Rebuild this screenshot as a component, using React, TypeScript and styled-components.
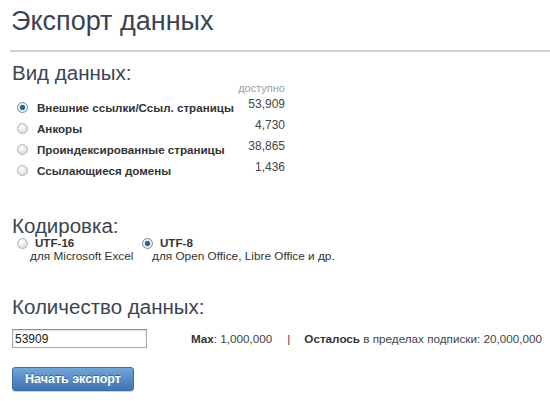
import { useState } from 'react';
import styled, { createGlobalStyle } from 'styled-components';

const GlobalStyle = createGlobalStyle`
    html, body {
        margin: 0;
        padding: 0;
        background: #ffffff;
    }
    body {
        font-family: 'Liberation Sans', Arial, sans-serif;
        color: #333333;
    }
`;

const Page = styled.div`
    width: 550px;
    height: 401px;
    padding: 5px 0 0 10px;
    box-sizing: border-box;
    overflow: hidden;
`;

const Title = styled.h1`
    margin: 0;
    padding-left: 1px;
    font-size: 27px;
    line-height: 32px;
    font-weight: normal;
    color: #3b4552;
`;

const Rule = styled.hr`
    margin: 13px 0 0;
    border: 0;
    border-top: 2px solid #d2d2d2;
`;

const SectionTitle = styled.h2<{ $top: number }>`
    margin: ${(p) => p.$top}px 0 0 2px;
    font-size: 20.5px;
    line-height: 19px;
    font-weight: normal;
    color: #3b4552;
`;

const TypeList = styled.div`
    width: 275px;
    padding-left: 7px;
    box-sizing: border-box;
`;

const AvailableHead = styled.div`
    text-align: right;
    font-size: 11px;
    line-height: 13px;
    color: #a0a0a0;
    margin-bottom: 2px;
`;

const TypeRow = styled.label`
    display: flex;
    justify-content: space-between;
    align-items: flex-start;
    height: 21px;
    cursor: pointer;
`;

const TypeName = styled.span`
    display: flex;
    align-items: center;
    gap: 9px;
    font-size: 11.6px;
    line-height: 21px;
    font-weight: bold;
    color: #333333;
`;

const Count = styled.span`
    font-size: 12px;
    line-height: 15px;
    color: #444444;
`;

const Radio = styled.span<{ $on: boolean }>`
    display: inline-block;
    flex: none;
    width: 11px;
    height: 11px;
    border-radius: 50%;
    box-sizing: border-box;
    border: 1px solid ${(p) => (p.$on ? '#7d8a96' : '#b4b4b4')};
    background: ${(p) =>
        p.$on
            ? 'radial-gradient(circle at 50% 50%, #1d5c86 0, #2a6f9a 2.3px, #e6ecf0 3px, #f4f4f4 100%)'
            : 'radial-gradient(circle at 40% 35%, #ffffff 0, #e2e2e2 60%, #cfcfcf 100%)'};
`;

const Encodings = styled.div`
    display: flex;
    margin-top: 1px;
`;

const Encoding = styled.label<{ $width: number; $pad: number; $subPad: number }>`
    display: block;
    width: ${(p) => p.$width}px;
    padding-left: ${(p) => p.$pad}px;
    cursor: pointer;
    box-sizing: border-box;

    & > div:last-child {
        margin-left: ${(p) => p.$subPad}px;
    }
`;

const EncodingTop = styled.div`
    display: flex;
    align-items: center;
    gap: 7px;
    font-size: 11.6px;
    line-height: 14px;
    font-weight: bold;
`;

const EncodingNote = styled.div`
    font-size: 11.8px;
    line-height: 13px;
    color: #333333;
`;

const AmountRow = styled.div`
    display: flex;
    align-items: center;
    margin-top: 13px;
    padding-left: 2px;
`;

const AmountInput = styled.input`
    width: 135px;
    height: 19px;
    box-sizing: border-box;
    border: 1px solid #a9a9a9;
    border-top-color: #8c8c8c;
    box-shadow: inset 0 1px 2px rgba(0, 0, 0, 0.12);
    padding: 0 2px;
    font-family: 'Liberation Sans', Arial, sans-serif;
    font-size: 12px;
    color: #222222;
    outline: none;
`;

const Limits = styled.div`
    margin-left: 44px;
    font-size: 11.7px;
    color: #444444;
    white-space: nowrap;

    b {
        color: #333333;
    }
`;

const Sep = styled.span`
    margin: 0 14px 0 15px;
`;

const StartButton = styled.button`
    display: block;
    margin: 19px 0 0 2px;
    width: 122px;
    height: 24px;
    border: 1px solid #3e6f9f;
    border-radius: 3px;
    background: linear-gradient(#74a5d8, #5489c4 55%, #3f74b0);
    box-shadow: 0 1px 1px rgba(0, 0, 0, 0.2);
    color: #ffffff;
    font-family: 'Liberation Sans', Arial, sans-serif;
    font-size: 12.5px;
    font-weight: bold;
    text-shadow: 0 -1px 0 rgba(0, 0, 0, 0.35);
    cursor: pointer;
`;

const types = [
    { id: 'links', name: 'Внешние ссылки/Ссыл. страницы', count: '53,909' },
    { id: 'anchors', name: 'Анкоры', count: '4,730' },
    { id: 'pages', name: 'Проиндексированные страницы', count: '38,865' },
    { id: 'domains', name: 'Ссылающиеся домены', count: '1,436' },
];

export default function App() {
    const [type, setType] = useState('links');
    const [encoding, setEncoding] = useState('utf8');
    const [amount, setAmount] = useState('53909');

    return (
        <Page>
            <GlobalStyle />
            <Title>Экспорт данных</Title>
            <Rule />

            <SectionTitle $top={11}>Вид данных:</SectionTitle>
            <TypeList>
                <AvailableHead>доступно</AvailableHead>
                {types.map((t) => (
                    <TypeRow key={t.id} onClick={() => setType(t.id)}>
                        <TypeName>
                            <Radio $on={type === t.id} />
                            {t.name}
                        </TypeName>
                        <Count>{t.count}</Count>
                    </TypeRow>
                ))}
            </TypeList>

            <SectionTitle $top={35}>Кодировка:</SectionTitle>
            <Encodings>
                <Encoding $width={128} $pad={7} $subPad={13} onClick={() => setEncoding('utf16')}>
                    <EncodingTop>
                        <Radio $on={encoding === 'utf16'} />
                        UTF-16
                    </EncodingTop>
                    <EncodingNote>для Microsoft Excel</EncodingNote>
                </Encoding>
                <Encoding $width={220} $pad={4} $subPad={10} onClick={() => setEncoding('utf8')}>
                    <EncodingTop>
                        <Radio $on={encoding === 'utf8'} />
                        UTF-8
                    </EncodingTop>
                    <EncodingNote>для Open Office, Libre Office и др.</EncodingNote>
                </Encoding>
            </Encodings>

            <SectionTitle $top={34}>Количество данных:</SectionTitle>
            <AmountRow>
                <AmountInput value={amount} onChange={(e) => setAmount(e.target.value)} />
                <Limits>
                    <b>Max</b>: 1,000,000
                    <Sep>|</Sep>
                    <b>Осталось</b> в пределах подписки: 20,000,000
                </Limits>
            </AmountRow>

            <StartButton type='button'>Начать экспорт</StartButton>
        </Page>
    );
}
